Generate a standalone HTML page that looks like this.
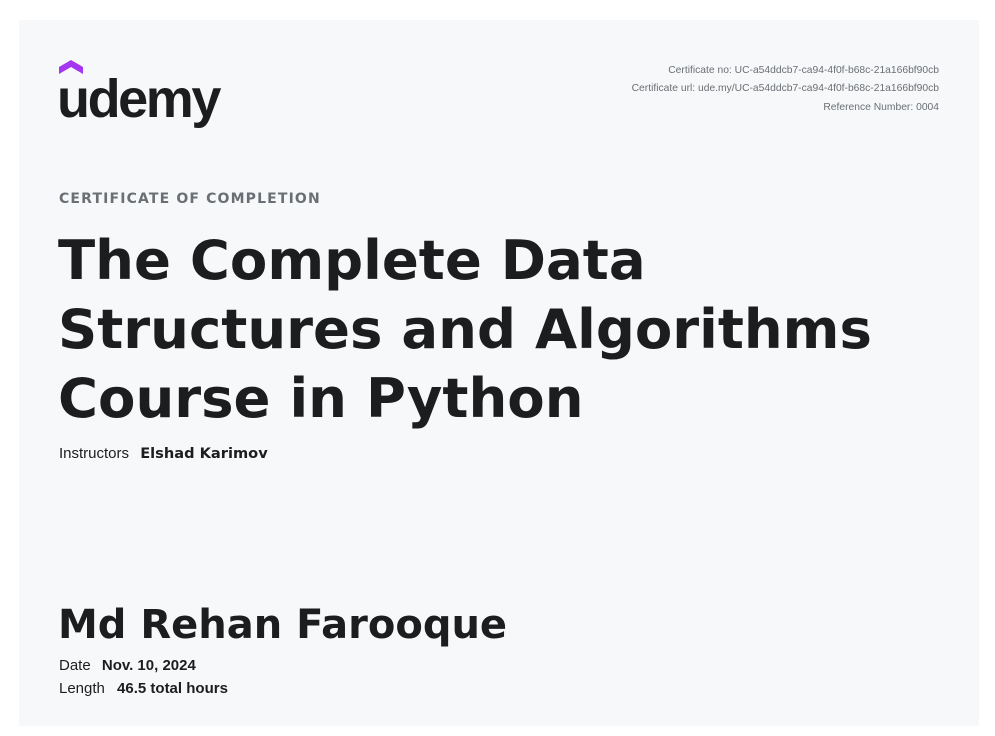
<!DOCTYPE html>
<html><head><meta charset="utf-8"><style>
html,body{margin:0;padding:0;background:#fff;}
body{width:995px;height:736px;position:relative;overflow:hidden;}
.card{position:absolute;left:19px;top:20px;width:960px;height:706px;background:#f7f8fa;}
.abs{position:absolute;white-space:nowrap;}
.logo{font-family:"Liberation Sans",sans-serif;font-size:54px;letter-spacing:-2.4px;color:#1c1d1f;font-weight:bold;}
.meta{right:40px;font-family:"Liberation Sans",sans-serif;font-size:10.3px;color:#6a6f73;text-align:right;}
.coc{left:40px;top:171px;font-family:"DejaVu Sans",sans-serif;font-weight:bold;font-size:14px;letter-spacing:1.15px;color:#6a6f73;}
.title{left:39px;top:206px;font-family:"DejaVu Sans",sans-serif;font-weight:bold;font-size:54.5px;line-height:69px;color:#1c1d1f;white-space:normal;width:880px;}
.lbl{font-family:"Liberation Sans",sans-serif;font-size:15px;color:#1c1d1f;}
.lbl b{font-weight:bold;margin-left:8px;}
.name{left:39px;top:582px;font-family:"DejaVu Sans",sans-serif;font-weight:bold;font-size:40px;color:#1c1d1f;}
</style></head><body>
<div class="card">
  <svg class="abs" style="left:40px;top:40px" width="24" height="15" viewBox="0 0 24 15"><path d="M0 7 L12 0 L24 7 L24 14 L12 7 L0 14Z" fill="#a435f0"/></svg>
  <div class="abs logo" style="left:38px;top:48px">udemy</div>
  <div class="abs meta" style="top:45px">Certificate no: UC-a54ddcb7-ca94-4f0f-b68c-21a166bf90cb</div>
  <div class="abs meta" style="top:63px">Certificate url: ude.my/UC-a54ddcb7-ca94-4f0f-b68c-21a166bf90cb</div>
  <div class="abs meta" style="top:82px">Reference Number: 0004</div>
  <div class="abs coc">CERTIFICATE OF COMPLETION</div>
  <div class="abs title">The Complete Data Structures and Algorithms Course in Python</div>
  <div class="abs lbl" style="left:40px;top:425px">Instructors <b style="font-family:'DejaVu Sans',sans-serif;font-size:14.6px;margin-left:7px">Elshad Karimov</b></div>
  <div class="abs name">Md Rehan Farooque</div>
  <div class="abs lbl" style="left:40px;top:637px">Date <b style="margin-left:7px">Nov. 10, 2024</b></div>
  <div class="abs lbl" style="left:40px;top:660px">Length <b>46.5 total hours</b></div>
</div>
</body></html>
